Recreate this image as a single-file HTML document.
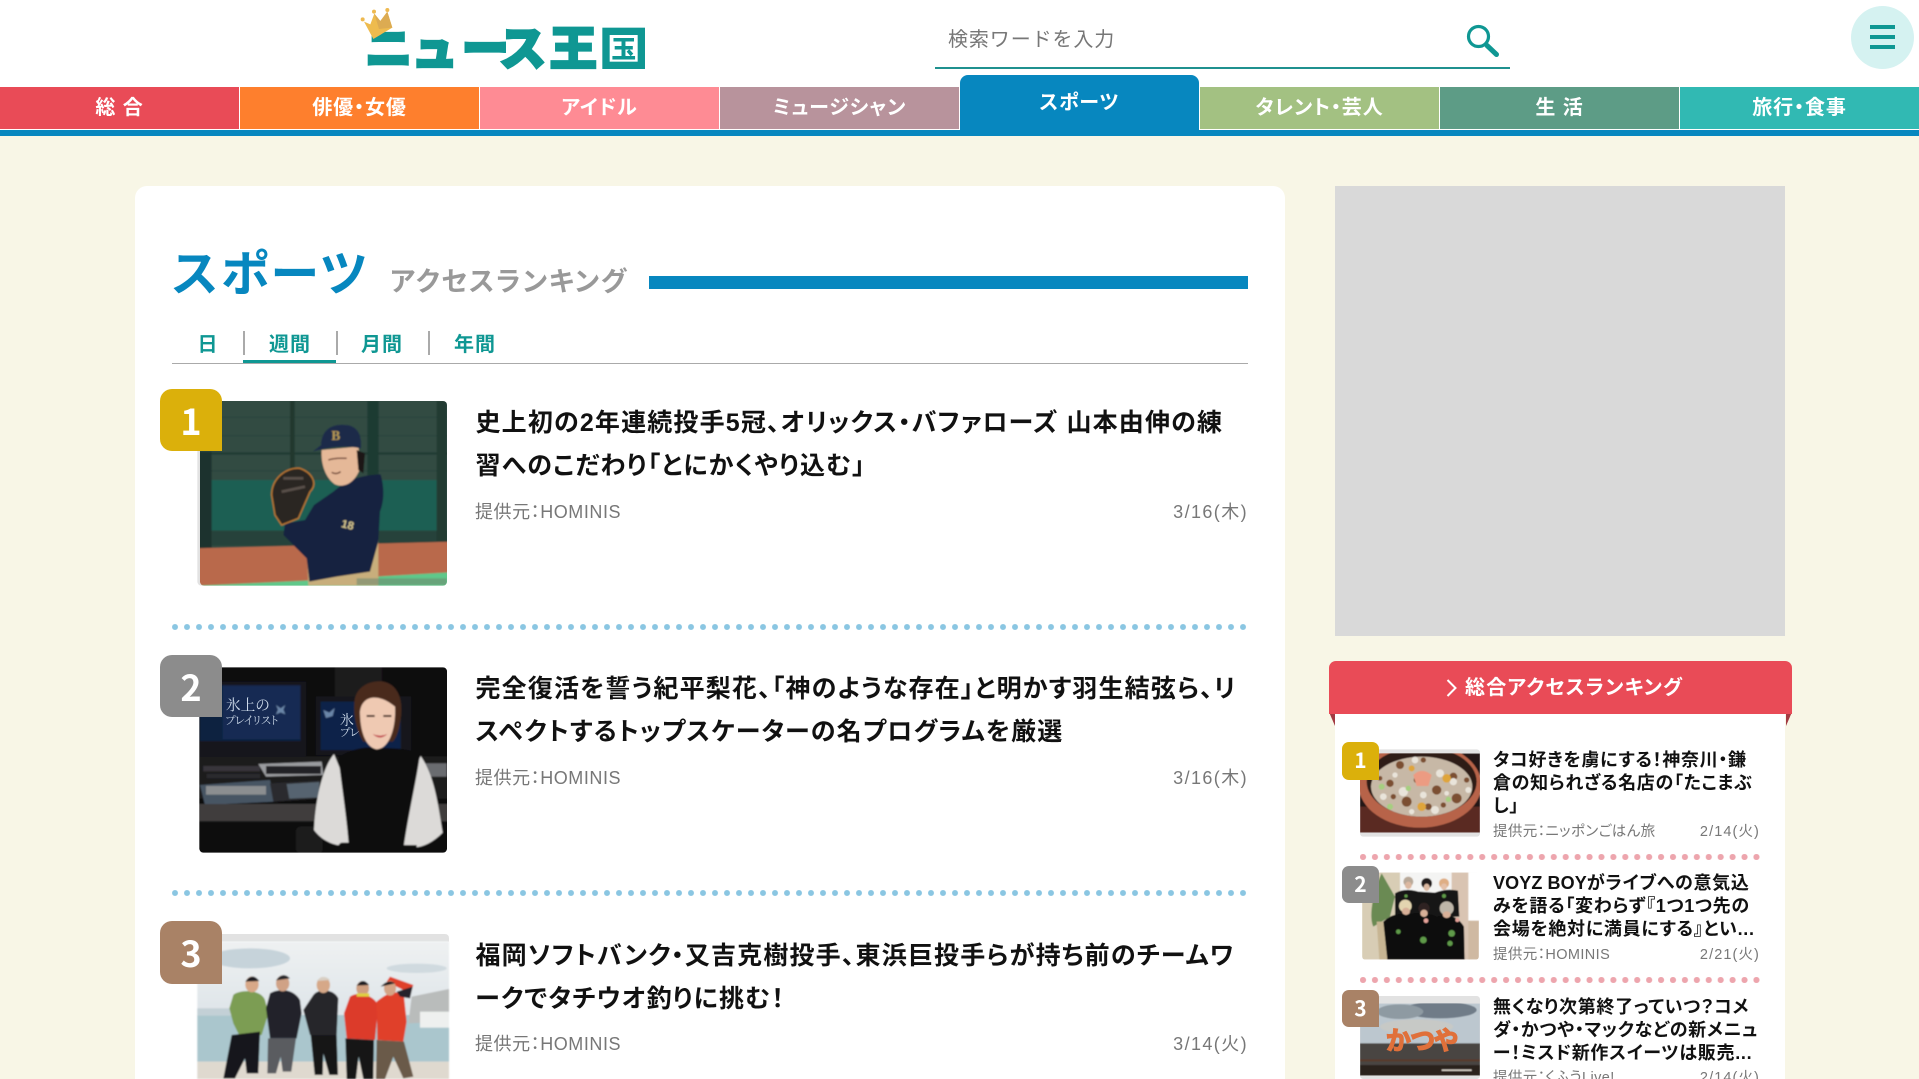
<!DOCTYPE html>
<html lang="ja">
<head>
<meta charset="utf-8">
<title>ニュース王国</title>
<style>
*{box-sizing:border-box;margin:0;padding:0}
html,body{width:1919px;height:1079px;overflow:hidden;background:#f8f6e6}
body{position:relative;font-family:"Liberation Sans","Noto Sans CJK JP",sans-serif;font-feature-settings:"palt"}
.a{position:absolute}
.nav{position:absolute;top:87px;height:42px;width:239px;color:#fff;font-weight:700;font-size:20px;line-height:43px;text-align:center;letter-spacing:.9px}
.ti{position:absolute;left:475.500px;width:790px;font-size:25px;line-height:43px;font-weight:700;color:#111;letter-spacing:1.170px;white-space:nowrap}
.src{position:absolute;left:475px;font-size:18px;line-height:24px;color:#777;letter-spacing:.55px;white-space:nowrap}
.dt{position:absolute;right:671px;font-size:18px;line-height:24px;color:#777;letter-spacing:1.400px;white-space:nowrap}
.dots{position:absolute;left:172px;width:1077px;height:6px;background:radial-gradient(circle at 3px 3px,#8ac6e2 2.600px,transparent 3.300px) 0 0/12px 6px repeat-x}
.rk{position:absolute;left:160px;width:62px;height:62px;border-radius:12px 12px 0 12px;color:#fff;font-family:"Noto Sans CJK JP",sans-serif;font-size:36px;font-weight:700;line-height:62px;text-align:center}
.tab{position:absolute;top:332px;width:92px;height:29px;color:#0f9793;font-weight:700;font-size:20px;line-height:27px;text-align:center;letter-spacing:1px}
.sep{position:absolute;top:331px;width:2px;height:24px;background:#aaa}
.st{position:absolute;left:1493px;width:290px;font-size:18px;line-height:23px;font-weight:700;color:#111;letter-spacing:.7px;white-space:nowrap}
.ss{position:absolute;left:1493px;font-size:14.500px;line-height:20px;color:#777;letter-spacing:.4px;white-space:nowrap}
.sd{position:absolute;right:159px;font-size:14.500px;line-height:20px;color:#777;letter-spacing:1.100px;white-space:nowrap}
.sdots{position:absolute;left:1360px;width:402px;height:6px;background:radial-gradient(circle at 3px 3px,#eda5ad 2.700px,transparent 3.400px) 0 0/11.930px 6px repeat-x}
.sr{position:absolute;left:1342px;width:37px;height:37px;border-radius:7px 7px 0 7px;color:#fff;font-family:"Noto Sans CJK JP",sans-serif;font-size:21px;font-weight:700;line-height:36px;text-align:center}
</style>
</head>
<body>

<!-- header -->
<div class="a" style="left:0;top:0;width:1919px;height:130px;background:#fff"></div>

<!-- logo -->
<svg class="a" style="left:355px;top:5px" width="300" height="75" viewBox="0 0 900 225">
  <text x="30 178 322 438 584" y="182" font-family="'Noto Sans CJK JP',sans-serif" font-weight="900" font-size="142" fill="#0f9793" stroke="#0f9793" stroke-width="7">ニュース王</text>
  <rect x="742" y="68" width="128" height="124" fill="#0f9793"/>
  <rect x="764" y="90" width="84" height="80" fill="#fff"/>
  <text x="806" y="157" text-anchor="middle" font-family="'Noto Sans CJK JP',sans-serif" font-weight="900" font-size="74" fill="#0f9793">玉</text>
  <polygon points="27,50 46,58 58,26 76,48 97,20 112,68 55,102" fill="#eebb4e"/>
  <polygon points="58,26 76,48 97,20 112,68 72,72" fill="#dcab52"/>
  <circle cx="23" cy="43" r="6" fill="#eeb950"/><circle cx="57" cy="20" r="6" fill="#eeb950"/><circle cx="97" cy="15" r="6" fill="#eeb950"/>
</svg>

<!-- search -->
<div class="a" style="left:948px;top:27px;font-size:20px;line-height:27px;color:#777;letter-spacing:.9px;font-feature-settings:normal">検索ワードを入力</div>
<div class="a" style="left:935px;top:67px;width:575px;height:2px;background:#1f918f"></div>
<svg class="a" style="left:1460.500px;top:20px" width="45" height="45" viewBox="0 0 45 45">
  <circle cx="17.500" cy="16.500" r="10" fill="none" stroke="#0f9793" stroke-width="3.200"/>
  <line x1="26" y1="25.500" x2="35.500" y2="34.500" stroke="#0f9793" stroke-width="5" stroke-linecap="round"/>
</svg>

<!-- menu -->
<div class="a" style="left:1851px;top:6px;width:63px;height:63px;border-radius:50%;background:#d5f2f1"></div>
<div class="a" style="left:1870px;top:25px;width:25px;height:4px;background:#0f9793"></div>
<div class="a" style="left:1870px;top:35px;width:25px;height:4px;background:#0f9793"></div>
<div class="a" style="left:1870px;top:45px;width:25px;height:4px;background:#0f9793"></div>

<!-- nav -->
<div class="a" style="left:0;top:130px;width:1919px;height:6px;background:#0787bf"></div>
<div class="nav" style="left:0;background:#e94b57">総 合</div>
<div class="nav" style="left:240px;background:#fe7f2d">俳優・女優</div>
<div class="nav" style="left:480px;background:#fe8b94">アイドル</div>
<div class="nav" style="left:720px;background:#b8939c">ミュージシャン</div>
<div class="a" style="left:960px;top:75px;width:239px;height:61px;background:#0787bf;border-radius:8px 8px 0 0;color:#fff;font-weight:700;font-size:20px;line-height:56px;text-align:center;letter-spacing:.9px">スポーツ</div>
<div class="nav" style="left:1200px;background:#a3c182">タレント・芸人</div>
<div class="nav" style="left:1440px;background:#5d9c86">生 活</div>
<div class="nav" style="left:1680px;width:239px;background:#31b9b3">旅行・食事</div>

<!-- main card -->
<div class="a" style="left:135px;top:186px;width:1150px;height:893px;background:#fff;border-radius:12px 12px 0 0"></div>

<div class="a" style="left:172px;top:240px;font-size:49px;line-height:70px;font-weight:700;color:#0787bf;white-space:nowrap;letter-spacing:2.600px">スポーツ</div>
<div class="a" style="left:390px;top:263px;font-size:27px;line-height:38px;font-weight:700;color:#999;white-space:nowrap;letter-spacing:1.700px">アクセスランキング</div>
<div class="a" style="left:649px;top:276px;width:599px;height:13px;background:#0787bf"></div>

<div class="a" style="left:172px;top:363px;width:1076px;height:1px;background:#aaa"></div>
<div class="tab" style="left:162px">日</div>
<div class="sep" style="left:243px"></div>
<div class="tab" style="left:244px">週間</div>
<div class="a" style="left:243px;top:360px;width:93px;height:3px;background:#0f9793"></div>
<div class="sep" style="left:336px"></div>
<div class="tab" style="left:336px">月間</div>
<div class="sep" style="left:428px"></div>
<div class="tab" style="left:429px">年間</div>

<!-- photo 1 -->
<svg class="a" style="left:190px;top:395px" width="265" height="200" viewBox="0 0 795 600">
  <defs>
    <clipPath id="c1"><rect x="30" y="18" width="741" height="554" rx="12"/></clipPath>
    <filter id="b1" x="-5%" y="-5%" width="110%" height="110%"><feGaussianBlur stdDeviation="2"/></filter>
  </defs>
  <rect x="22" y="18" width="749" height="554" rx="12" fill="#e2e2e2"/>
  <g clip-path="url(#c1)"><g filter="url(#b1)">
    <rect x="20" y="10" width="760" height="570" fill="#324c43"/>
    <rect x="20" y="65" width="760" height="4" fill="#2a443c"/>
    <rect x="20" y="120" width="760" height="4" fill="#2a443c"/>
    <rect x="20" y="172" width="760" height="7" fill="#233a33"/>
    <rect x="20" y="225" width="760" height="5" fill="#2a443c"/>
    <rect x="60" y="255" width="700" height="152" fill="#1f5e53"/>
    <rect x="20" y="407" width="760" height="45" fill="#26423a"/>
    <rect x="20" y="170" width="45" height="290" fill="#1f332e"/>
    <rect x="300" y="18" width="14" height="205" fill="#22382f"/>
    <rect x="532" y="18" width="34" height="230" fill="#1d3a32"/>
    <rect x="740" y="18" width="30" height="420" fill="#223a33"/>
    <polygon points="20,460 320,452 780,440 780,540 500,560 200,572 20,572" fill="#b9694b"/>
    <polygon points="20,572 360,556 780,532 780,580 20,580" fill="#5ec88a"/>
    <polygon points="350,470 520,450 565,430 565,572 355,572" fill="#c8ae7c"/>
    <path d="M430 290 C470 255 510 240 572 238 C584 280 582 320 570 350 L565 440 L540 530 L440 545 L358 560 L350 490 L280 420 L285 385 L345 375 L372 330 Z" fill="#18233f"/>
    <path d="M395 165 L505 155 L512 215 C500 255 470 282 435 268 C408 250 392 210 395 165Z" fill="#e5b898"/>
    <path d="M500 165 L525 175 L520 235 L505 225Z" fill="#1a1512"/>
    <path d="M393 150 C395 100 430 85 470 90 C505 95 515 120 513 160 C465 150 420 155 368 170 Z" fill="#1c2a48"/>
    <text x="424" y="135" font-size="40" font-weight="700" fill="#b89a54" font-family="'Liberation Serif',serif">B</text>
    <path d="M415 195 Q435 188 470 190 M425 232 Q438 240 452 230" stroke="#6a4030" stroke-width="4" fill="none"/>
    <path d="M245 300 C245 250 290 215 330 220 C365 232 385 265 360 290 L325 370 L275 390 L255 360 Z" fill="#2c2724" stroke="#bd7830" stroke-width="4"/>
    <path d="M280 250 L340 250 M275 290 L345 275" stroke="#59504a" stroke-width="8"/>
    <text x="454" y="400" font-size="34" font-weight="700" fill="#d8c890" font-family="'Liberation Sans',sans-serif" transform="rotate(14 470 390)">18</text>
    <rect x="500" y="550" width="270" height="20" fill="#6f8a70" opacity=".6"/>
  </g></g>
</svg>
<div class="rk" style="top:389px;background:#dbb00b">1</div>
<div class="ti" style="top:401.500px">史上初の2年連続投手5冠、オリックス・バファローズ 山本由伸の練<br>習へのこだわり「とにかくやり込む」</div>
<div class="src" style="top:500px">提供元：HOMINIS</div>
<div class="dt" style="top:500px">3/16(木)</div>
<div class="dots" style="top:624px"></div>

<!-- photo 2 -->
<svg class="a" style="left:190px;top:660px" width="265" height="200" viewBox="0 0 795 600">
  <defs><clipPath id="c2"><rect x="28" y="22" width="743" height="556" rx="12"/></clipPath></defs>
  <g clip-path="url(#c2)"><g filter="url(#b1)">
    <rect x="20" y="15" width="760" height="570" fill="#0c0b0d"/>
    <rect x="435" y="15" width="140" height="100" fill="#1e1c1e"/>
    <rect x="28" y="65" width="320" height="225" fill="#16161a"/>
    <rect x="30" y="75" width="302" height="168" fill="#10213f"/>
    <rect x="98" y="78" width="232" height="160" fill="#122a52"/>
    <rect x="378" y="110" width="285" height="175" fill="#17171b"/>
    <rect x="392" y="125" width="240" height="145" fill="#102349"/>
    <path d="M258 135 l14 10 l14 -10 l-6 14 l6 14 l-14 -6 l-14 6 l6 -14Z M400 150 l18 8 l16 -14 l-6 24 l-20 6Z" fill="#6a86a8"/>
    <rect x="28" y="290" width="750" height="125" fill="#1a1a1c"/>
    <rect x="40" y="318" width="170" height="16" fill="#38363a"/>
    <rect x="50" y="342" width="160" height="12" fill="#2c2b2e"/>
    <polygon points="205,312 395,305 400,345 228,350" fill="#9a9b9f"/>
    <rect x="228" y="318" width="165" height="24" fill="#242428"/>
    <path d="M30 375 L240 360 L255 425 L45 435Z" fill="#465463"/>
    <rect x="48" y="378" width="180" height="26" fill="#8b8e90"/>
    <polygon points="240,370 390,362 390,415 250,425" fill="#2a2a2d"/>
    <polygon points="290,372 388,366 388,412 298,416" fill="#566470"/>
    <rect x="28" y="432" width="750" height="52" fill="#3f3e3d"/>
    <rect x="700" y="310" width="70" height="40" fill="#6a6c70"/>
    <rect x="28" y="484" width="360" height="100" fill="#070707"/>
    <rect x="318" y="500" width="80" height="80" rx="14" fill="#1b1b1d"/>
    <path d="M432 282 C395 325 375 430 372 510 C400 548 445 562 480 556 L480 400Z" fill="#dcdad8"/>
    <path d="M692 288 C735 350 745 440 758 518 C720 556 680 572 640 556 L640 400Z" fill="#dcdad8"/>
    <path d="M445 290 C480 270 520 258 560 264 C610 264 660 265 690 282 C680 360 655 460 640 570 L478 580 C472 480 455 380 445 290Z" fill="#0d0c0d"/>
    <rect x="445" y="548" width="60" height="30" rx="12" fill="#111"/>
    <rect x="610" y="555" width="70" height="25" fill="#111"/>
    <path d="M493 130 C495 80 540 60 580 65 C625 75 640 120 632 175 C628 205 622 230 608 245 L520 245 C502 215 490 175 493 130Z" fill="#4a2a1c"/>
    <path d="M510 155 C515 110 560 95 615 140 C618 200 600 265 560 268 C525 262 510 210 510 155Z" fill="#efc9b2"/>
    <path d="M548 222 Q570 232 592 222 Q570 244 548 222Z" fill="#c44d52"/>
    <path d="M530 168 h24 M580 168 h24" stroke="#4a2f24" stroke-width="6"/>
  </g></g>
  <text x="108" y="150" font-size="44" fill="#cfdceb" font-family="'Liberation Serif','Noto Serif CJK SC',serif">氷上の</text>
  <text x="106" y="192" font-size="33" fill="#cfdceb" font-family="'Liberation Serif','Noto Serif CJK SC',serif">プレイリスト</text>
  <text x="450" y="195" font-size="42" fill="#cfdceb" font-family="'Liberation Serif','Noto Serif CJK SC',serif">氷</text>
  <text x="450" y="228" font-size="33" fill="#cfdceb" font-family="'Liberation Serif','Noto Serif CJK SC',serif">プレ</text>
</svg>
<div class="rk" style="top:655px;background:#8c8c8c">2</div>
<div class="ti" style="top:667.500px">完全復活を誓う紀平梨花、「神のような存在」と明かす羽生結弦ら、リ<br>スペクトするトップスケーターの名プログラムを厳選</div>
<div class="src" style="top:766px">提供元：HOMINIS</div>
<div class="dt" style="top:766px">3/16(木)</div>
<div class="dots" style="top:890px"></div>

<!-- photo 3 -->
<svg class="a" style="left:190px;top:925px" width="265" height="154" viewBox="0 0 795 462">
  <defs>
    <linearGradient id="sky" x1="0" y1="0" x2="0" y2="1"><stop offset="0" stop-color="#eef1f2"/><stop offset=".5" stop-color="#dfe5e9"/><stop offset="1" stop-color="#f1f3f3"/></linearGradient>
  </defs>
  <path d="M22 50 V40 Q22 27 35 27 H764 Q777 27 777 40 V50Z" fill="#e2e2e2"/>
  <g filter="url(#b1)">
    <rect x="22" y="50" width="755" height="412" fill="url(#sky)"/>
    <ellipse cx="180" cy="100" rx="120" ry="30" fill="#c6d3da"/>
    <ellipse cx="680" cy="130" rx="90" ry="14" fill="#d0dadf"/>
    <rect x="22" y="270" width="755" height="140" fill="#aac6cd"/>
    <rect x="22" y="250" width="100" height="22" fill="#c3d0d6"/>
    <polygon points="665,215 777,192 777,290 655,295" fill="#b9bcbb"/>
    <rect x="690" y="260" width="87" height="48" fill="#eef0ef"/>
    <rect x="22" y="410" width="755" height="52" fill="#dfd9cf"/>
    <path d="M130 210 C145 195 210 190 225 225 L235 265 L215 330 L150 335 L130 295 L118 250Z" fill="#7c9d52"/>
    <path d="M125 330 L210 320 L205 445 L170 445 L165 400 L135 460 L100 460Z" fill="#16151a"/>
    <ellipse cx="186" cy="178" rx="20" ry="24" fill="#d8a888"/><path d="M166 170 Q186 140 208 168Z" fill="#1a1c24"/>
    <path d="M240 205 C265 190 310 190 330 225 L335 265 L320 340 L240 340 L228 250Z" fill="#24242a"/>
    <path d="M234 340 L318 340 L304 440 L278 440 L272 395 L258 445 L232 445Z" fill="#5a5c60"/>
    <ellipse cx="278" cy="175" rx="20" ry="24" fill="#d0a286"/><path d="M258 166 Q278 138 300 160Z" fill="#26262c"/>
    <path d="M370 210 C385 190 430 190 445 220 L440 330 L360 330 L340 255Z" fill="#28282c"/>
    <path d="M362 330 L440 330 L444 450 L418 450 L400 385 L398 450 L374 450Z" fill="#141417"/>
    <ellipse cx="400" cy="180" rx="20" ry="24" fill="#d6a888"/><path d="M380 168 Q400 145 420 165Z" fill="#d8cfc4"/>
    <path d="M480 215 C500 200 545 205 565 240 L555 345 L470 340 L462 265Z" fill="#dc3a2c"/>
    <path d="M466 340 L552 345 L550 462 L520 462 L506 395 L498 462 L470 462Z" fill="#141416"/>
    <ellipse cx="518" cy="190" rx="19" ry="22" fill="#cf9f80"/><path d="M500 182 Q518 155 537 180Z" fill="#1a1a20"/>
    <rect x="500" y="205" width="38" height="10" fill="#e0d040"/>
    <path d="M560 230 C590 205 620 190 640 215 L660 210 L670 180 L600 155 L590 170 L640 195 L650 290 L640 350 L562 345Z" fill="#e0402c"/>
    <path d="M620 200 L668 185 L660 220 L630 215Z" fill="#26242a"/>
    <path d="M560 345 L642 350 L670 455 L640 460 L610 395 L585 462 L558 462Z" fill="#6a5a48"/>
    <ellipse cx="600" cy="190" rx="18" ry="22" fill="#d4a486"/><path d="M572 185 Q595 160 615 175Z" fill="#16161a"/>
  </g>
</svg>
<div class="rk" style="top:921px;height:63px;background:#a98266">3</div>
<div class="ti" style="top:934.500px">福岡ソフトバンク・又吉克樹投手、東浜巨投手らが持ち前のチームワ<br>ークでタチウオ釣りに挑む！</div>
<div class="src" style="top:1032px">提供元：HOMINIS</div>
<div class="dt" style="top:1032px">3/14(火)</div>

<!-- ad -->
<div class="a" style="left:1335px;top:186px;width:450px;height:450px;background:#d9d9d9"></div>

<!-- sidebar -->
<div class="a" style="left:1335px;top:714px;width:450px;height:365px;background:#fff"></div>
<svg class="a" style="left:1329px;top:712px" width="463" height="16" viewBox="0 0 463 16">
  <polygon points="0,0 6,0 6,14" fill="#a23a42"/>
  <polygon points="463,0 457,0 457,14" fill="#a23a42"/>
</svg>
<div class="a" style="left:1329px;top:661px;width:463px;height:53px;background:#e94b57;border-radius:7px 7px 0 0"></div>
<svg class="a" style="left:1445px;top:677px" width="14" height="22" viewBox="0 0 14 22"><path d="M2.500 3 L10.500 11 L2.500 19" fill="none" stroke="#fff" stroke-width="2"/></svg>
<div class="a" style="left:1465px;top:671.500px;font-size:20px;line-height:33px;font-weight:700;color:#fff;white-space:nowrap;letter-spacing:1.200px">総合アクセスランキング</div>

<svg class="a" style="left:1340px;top:740px" width="150" height="339" viewBox="0 0 450 1017">
  <defs>
    <clipPath id="s1"><rect x="60" y="40" width="360" height="238"/></clipPath>
    <clipPath id="s2"><rect x="66" y="397" width="351" height="262" rx="10"/></clipPath>
    <clipPath id="s3"><rect x="60" y="790" width="360" height="217"/></clipPath>
    <filter id="b2" x="-5%" y="-5%" width="110%" height="110%"><feGaussianBlur stdDeviation="1.500"/></filter>
  </defs>
  <rect x="60" y="28" width="360" height="262" rx="10" fill="#e2e2e2"/>
  <g clip-path="url(#s1)"><g filter="url(#b2)">
    <rect x="60" y="40" width="360" height="238" fill="#241613"/>
    <rect x="60" y="200" width="360" height="78" fill="#5a2c24"/>
    <ellipse cx="240" cy="135" rx="184" ry="128" fill="#b7634a"/>
    <ellipse cx="245" cy="125" rx="165" ry="105" fill="#2e1c18"/>
    <ellipse cx="245" cy="140" rx="152" ry="90" fill="#c7b8a6"/>
    <g fill="#7c5030">
      <circle cx="180" cy="75" r="12"/><circle cx="290" cy="150" r="14"/><circle cx="200" cy="185" r="15"/><circle cx="350" cy="175" r="15"/><circle cx="150" cy="130" r="11"/><circle cx="340" cy="110" r="12"/><circle cx="250" cy="60" r="8"/><circle cx="265" cy="200" r="10"/><circle cx="230" cy="120" r="9"/><circle cx="120" cy="115" r="7"/><circle cx="310" cy="195" r="8"/><circle cx="160" cy="170" r="8"/><circle cx="380" cy="120" r="8"/>
    </g>
    <g fill="#e9e4da">
      <circle cx="190" cy="155" r="14"/><circle cx="285" cy="210" r="12"/><circle cx="340" cy="125" r="11"/><circle cx="300" cy="100" r="12"/><circle cx="130" cy="170" r="10"/><circle cx="225" cy="60" r="10"/><circle cx="385" cy="150" r="9"/><circle cx="165" cy="105" r="8"/><circle cx="250" cy="165" r="10"/><circle cx="215" cy="215" r="8"/><circle cx="320" cy="160" r="7"/>
    </g>
    <g fill="#dfa53a"><circle cx="320" cy="115" r="13"/><circle cx="245" cy="200" r="13"/><circle cx="215" cy="85" r="9"/></g>
    <g fill="#a6cf80"><circle cx="125" cy="140" r="9"/><circle cx="205" cy="145" r="8"/><circle cx="150" cy="200" r="9"/><circle cx="325" cy="178" r="8"/></g>
    <path d="M220 105 Q245 80 275 105 L265 138 L230 138Z" fill="#ec9b82"/>
  </g></g>
  <g clip-path="url(#s2)"><g filter="url(#b2)">
    <rect x="66" y="397" width="351" height="262" fill="#efe9e0"/>
    <rect x="66" y="397" width="115" height="262" fill="#d8cdb5"/>
    <rect x="180" y="397" width="155" height="90" fill="#f4f4f3"/>
    <rect x="335" y="397" width="55" height="262" fill="#d9c4b2"/>
    <rect x="385" y="397" width="32" height="145" fill="#fff"/>
    <rect x="385" y="542" width="32" height="117" fill="#cfb9a2"/>
    <path d="M125 400 C100 450 85 530 100 560 L150 530 L165 470Z" fill="#6a8a52"/>
    <path d="M110 545 L140 545 L150 659 L118 659Z" fill="#c7b593"/>
    <path d="M165 460 Q195 442 235 455 L285 458 Q320 444 354 452 L358 530 L165 535Z" fill="#131313"/>
    <path d="M130 545 Q160 515 200 525 Q250 510 290 530 Q345 515 372 560 L374 659 L142 659Z" fill="#111"/>
    <circle cx="205" cy="425" r="15" fill="#b8a898"/><ellipse cx="205" cy="436" rx="10" ry="11" fill="#dcb8a0"/>
    <circle cx="260" cy="430" r="16" fill="#221a1a"/><ellipse cx="260" cy="442" rx="9" ry="11" fill="#dcb8a0"/>
    <circle cx="312" cy="430" r="15" fill="#dfae84"/><ellipse cx="312" cy="440" rx="9" ry="10" fill="#e4c0a8"/>
    <circle cx="196" cy="498" r="19" fill="#e3d5b0"/><ellipse cx="198" cy="514" rx="12" ry="11" fill="#d8b098"/>
    <circle cx="252" cy="505" r="17" fill="#2e2420"/><ellipse cx="252" cy="520" rx="11" ry="11" fill="#d8b098"/>
    <circle cx="320" cy="505" r="21" fill="#bdb5a8"/><ellipse cx="320" cy="524" rx="12" ry="10" fill="#d8b098"/>
    <g fill="#5f9a4a"><circle cx="175" cy="575" r="7"/><circle cx="250" cy="600" r="10"/><circle cx="335" cy="580" r="10"/><circle cx="330" cy="610" r="8"/><circle cx="312" cy="468" r="6"/><circle cx="198" cy="468" r="5"/></g>
    <g fill="#e6a39a"><circle cx="258" cy="542" r="7"/><circle cx="352" cy="540" r="6"/></g>
  </g></g>
  <rect x="60" y="768" width="360" height="249" rx="10" fill="#e2e2e2"/>
  <g clip-path="url(#s3)"><g filter="url(#b2)">
    <rect x="60" y="790" width="360" height="125" fill="#bcc7cf"/>
    <ellipse cx="300" cy="810" rx="110" ry="25" fill="#6f7c88"/>
    <ellipse cx="180" cy="815" rx="70" ry="22" fill="#8e9aa2"/>
    <ellipse cx="230" cy="860" rx="110" ry="22" fill="#c7c9c6"/>
    <rect x="60" y="910" width="360" height="65" fill="#4a4542"/>
    <rect x="60" y="975" width="360" height="32" fill="#2b201c"/>
    <rect x="305" y="988" width="90" height="5" fill="#cfc9c0"/>
    <rect x="60" y="958" width="360" height="6" fill="#5a3a2c"/>
  </g></g>
  <text x="138" y="928" font-size="76" font-weight="700" fill="#e0703a" stroke="#e0703a" stroke-width="4" font-family="'Liberation Sans','Noto Sans CJK JP',sans-serif" textLength="215" lengthAdjust="spacingAndGlyphs">かつや</text>
</svg>

<div class="sr" style="top:742px;height:38px;background:#dbb00b">1</div>
<div class="st" style="top:749px">タコ好きを虜にする！神奈川・鎌<br>倉の知られざる名店の「たこまぶ<br>し」</div>
<div class="ss" style="top:822px">提供元：ニッポンごはん旅</div>
<div class="sd" style="top:822px">2/14(火)</div>
<div class="sdots" style="top:854px"></div>

<div class="sr" style="top:866px;background:#8c8c8c">2</div>
<div class="st" style="top:872px"><span style="letter-spacing:.1px">VOYZ BOY</span>がライブへの意気込<br>みを語る「変わらず『1つ1つ先の<br>会場を絶対に満員にする』とい...</div>
<div class="ss" style="top:945px">提供元：HOMINIS</div>
<div class="sd" style="top:945px">2/21(火)</div>
<div class="sdots" style="top:977px"></div>

<div class="sr" style="top:990px;background:#a98266">3</div>
<div class="st" style="top:996px">無くなり次第終了っていつ？コメ<br>ダ・かつや・マックなどの新メニュ<br>ー！ミスド新作スイーツは販売...</div>
<div class="ss" style="top:1068px">提供元：くふうLive!</div>
<div class="sd" style="top:1068px">2/14(火)</div>

</body>
</html>
